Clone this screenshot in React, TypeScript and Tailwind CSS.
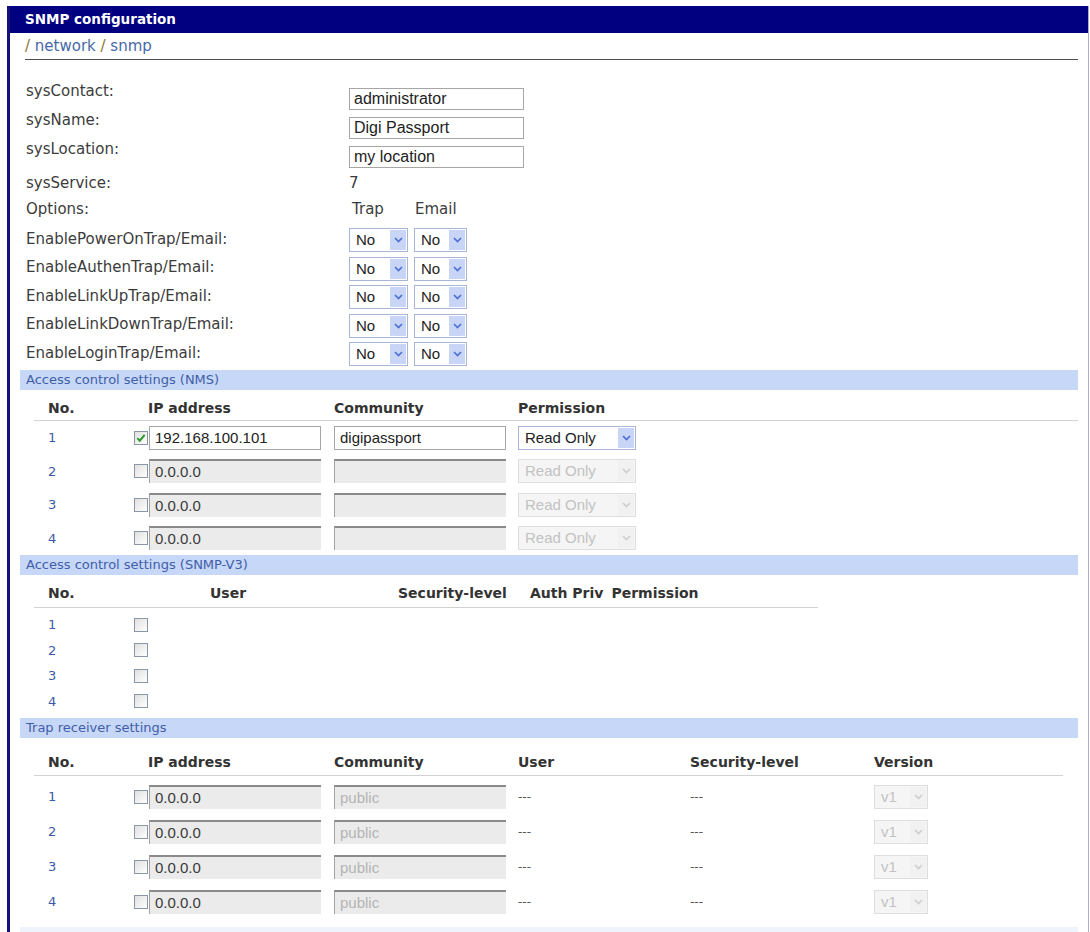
import React from 'react';

type SelProps = { value: string; w: string; disabled?: boolean };

const FakeSelect = ({ value, w, disabled = false }: SelProps) => (
  <div
    className={`flex h-[24px] ${w} items-stretch border font-['Liberation_Sans',sans-serif] text-[15px] ${
      disabled ? 'border-[#dedede] bg-[#f5f5f5] text-[#c2c2c2]' : 'border-[#a7b6d6] bg-white text-[#222]'
    }`}
  >
    <span className="flex flex-1 items-center pl-[6px] whitespace-nowrap">{value}</span>
    <span
      className={`m-[1px] flex w-[16px] items-center justify-center ${disabled ? 'bg-[#f1f1f1]' : 'bg-[#c8d5f6]'}`}
    >
      <svg width="9" height="6" viewBox="0 0 9 6">
        <path d="M1 1l3.5 3.5L8 1" stroke={disabled ? '#cfcfcf' : '#4d70d6'} strokeWidth="1.7" fill="none" />
      </svg>
    </span>
  </div>
);

const Check = ({ checked = false }: { checked?: boolean }) => (
  <span className="flex h-[14px] w-[14px] shrink-0 items-center justify-center border border-[#8a97a7] bg-gradient-to-br from-[#e0e0e0] to-white">
    {checked && (
      <svg width="10" height="10" viewBox="0 0 9 9">
        <path d="M1.2 4.6l2.2 2.3L7.8 1.6" stroke="#2a9a2a" strokeWidth="1.8" fill="none" />
      </svg>
    )}
  </span>
);

const TextBox = ({ value, w, disabled = false, faint = false }: { value: string; w: string; disabled?: boolean; faint?: boolean }) => (
  <div
    className={`flex h-[24px] ${w} items-center pl-[5px] font-['Liberation_Sans',sans-serif] text-[15px] whitespace-nowrap ${
      disabled
        ? 'border-t-2 border-l border-t-[#8a8a8a] border-l-[#a3a3a3] bg-[#ebebeb] ' + (faint ? 'text-[#b4b4b4]' : 'text-[#3a3a3a]')
        : 'border border-[#a6a6a6] bg-white text-[#222]'
    }`}
  >
    {value}
  </div>
);

const Bar = ({ title }: { title: string }) => (
  <div className="flex h-[20px] items-center bg-[#c7d7f7] pl-[6px] text-[13px] text-[#3f5ea9]">{title}</div>
);

const opts = [
  'EnablePowerOnTrap/Email:',
  'EnableAuthenTrap/Email:',
  'EnableLinkUpTrap/Email:',
  'EnableLinkDownTrap/Email:',
  'EnableLoginTrap/Email:',
];

const nms = [
  { ip: '192.168.100.101', comm: 'digipassport', on: true },
  { ip: '0.0.0.0', comm: '', on: false },
  { ip: '0.0.0.0', comm: '', on: false },
  { ip: '0.0.0.0', comm: '', on: false },
];

export default function App() {
  return (
    <div className="h-[932px] overflow-hidden bg-white pt-[6px] font-['DejaVu_Sans',sans-serif] text-[#3c3c3c]">
      <div className="ml-[7px] h-[940px] w-[1082px] border-l-[3px] border-r border-l-[#12127a] border-r-[#aeadd6]">
        {/* title bar */}
        <div className="flex h-[27px] items-center bg-[#000080] pl-[15px] text-[13.5px] font-bold text-white">
          SNMP configuration
        </div>

        <div className="px-[10px]">
          {/* breadcrumb */}
          <div className="ml-[5px] h-[27px] border-b border-[#4e4e4e] pt-[4px] text-[15px] leading-[18px]">
            <span className="text-[#8a7434]">/ </span>
            <span className="text-[#4868a8]">network</span>
            <span className="text-[#8a7434]"> / </span>
            <span className="text-[#4868a8]">snmp</span>
          </div>

          {/* system fields */}
          <div className="mt-[22px] text-[15px] leading-[18px]">
            {[
              ['sysContact:', 'administrator'],
              ['sysName:', 'Digi Passport'],
              ['sysLocation:', 'my location'],
            ].map(([label, val]) => (
              <div key={label} className="flex h-[29px]">
                <div className="w-[329px] pl-[6px]">{label}</div>
                <div className="flex h-[22px] w-[175px] mt-[6px] items-center border border-[#a6a6a6] pl-[4px] font-['Liberation_Sans',sans-serif] text-[16px] text-[#222]">
                  {val}
                </div>
              </div>
            ))}
            <div className="flex h-[28px] pt-[5px]">
              <div className="w-[329px] pl-[6px]">sysService:</div>
              <div>7</div>
            </div>
            <div className="flex h-[29px] pt-[3px]">
              <div className="w-[329px] pl-[6px]">Options:</div>
              <div className="w-[66px] pl-[3px]">Trap</div>
              <div>Email</div>
            </div>
            {opts.map((o) => (
              <div key={o} className="flex h-[28.5px] items-center">
                <div className="w-[329px] pl-[6px] -mt-[3px]">{o}</div>
                <FakeSelect value="No" w="w-[59px]" />
                <div className="w-[6px]" />
                <FakeSelect value="No" w="w-[53px]" />
              </div>
            ))}
          </div>

          {/* NMS */}
          <div className="mt-[1.5px]">
            <Bar title="Access control settings (NMS)" />
          </div>
          <div className="ml-[14px] flex h-[31px] items-end border-b border-[#d2d2d2] pb-[3px] text-[14px] font-bold leading-[18px] text-[#333]">
            <div className="w-[114px] pl-[14px]">No.</div>
            <div className="w-[186px]">IP address</div>
            <div className="w-[184px]">Community</div>
            <div>Permission</div>
          </div>
          {nms.map((r, i) => (
            <div key={i} className="ml-[14px] flex h-[33.5px] items-center">
              <div className="w-[100px] pl-[14px] text-[13px] text-[#3d5aa8]">{i + 1}</div>
              <Check checked={r.on} />
              <div className="w-[1px]" />
              <TextBox value={r.ip} w="w-[172px]" disabled={!r.on} />
              <div className="w-[13px]" />
              <TextBox value={r.comm} w="w-[172px]" disabled={!r.on} />
              <div className="w-[12px]" />
              <FakeSelect value="Read Only" w="w-[118px]" disabled={!r.on} />
            </div>
          ))}

          {/* SNMP-V3 */}
          <Bar title="Access control settings (SNMP-V3)" />
          <div className="ml-[14px] flex h-[33px] w-[784px] items-end border-b border-[#d2d2d2] pb-[5px] text-[14px] font-bold leading-[18px] text-[#333] whitespace-nowrap">
            <div className="w-[176px] pl-[14px]">No.</div>
            <div className="w-[188px]">User</div>
            <div className="w-[132px]">Security-level</div>
            <div className="mr-[8px]">Auth Priv</div>
            <div>Permission</div>
          </div>
          <div className="mt-[4px]">
            {[1, 2, 3, 4].map((n) => (
              <div key={n} className="ml-[14px] flex h-[25.5px] items-center">
                <div className="w-[100px] pl-[14px] text-[13px] text-[#3d5aa8]">{n}</div>
                <Check />
              </div>
            ))}
          </div>

          {/* Trap receivers */}
          <div className="mt-[4px]">
            <Bar title="Trap receiver settings" />
          </div>
          <div className="ml-[14px] mr-[15px] flex h-[38px] items-end border-b border-[#d2d2d2] pb-[4px] text-[14px] font-bold leading-[18px] text-[#333]">
            <div className="w-[114px] pl-[14px]">No.</div>
            <div className="w-[186px]">IP address</div>
            <div className="w-[184px]">Community</div>
            <div className="w-[172px]">User</div>
            <div className="w-[184px]">Security-level</div>
            <div>Version</div>
          </div>
          <div className="mt-[3.5px]">
            {[1, 2, 3, 4].map((n) => (
              <div key={n} className="ml-[14px] flex h-[35px] items-center">
                <div className="w-[100px] pl-[14px] text-[13px] text-[#3d5aa8]">{n}</div>
                <Check />
                <div className="w-[1px]" />
                <TextBox value="0.0.0.0" w="w-[172px]" disabled />
                <div className="w-[13px]" />
                <TextBox value="public" w="w-[172px]" disabled faint />
                <div className="w-[12px] shrink-0" />
                <div className="w-[172px] text-[12px] text-[#555]">---</div>
                <div className="w-[184px] text-[12px] text-[#555]">---</div>
                <FakeSelect value="v1" w="w-[54px]" disabled />
              </div>
            ))}
          </div>
          <div className="mt-[7px] h-[20px] bg-[#eef3fc]" />
        </div>
      </div>
    </div>
  );
}
